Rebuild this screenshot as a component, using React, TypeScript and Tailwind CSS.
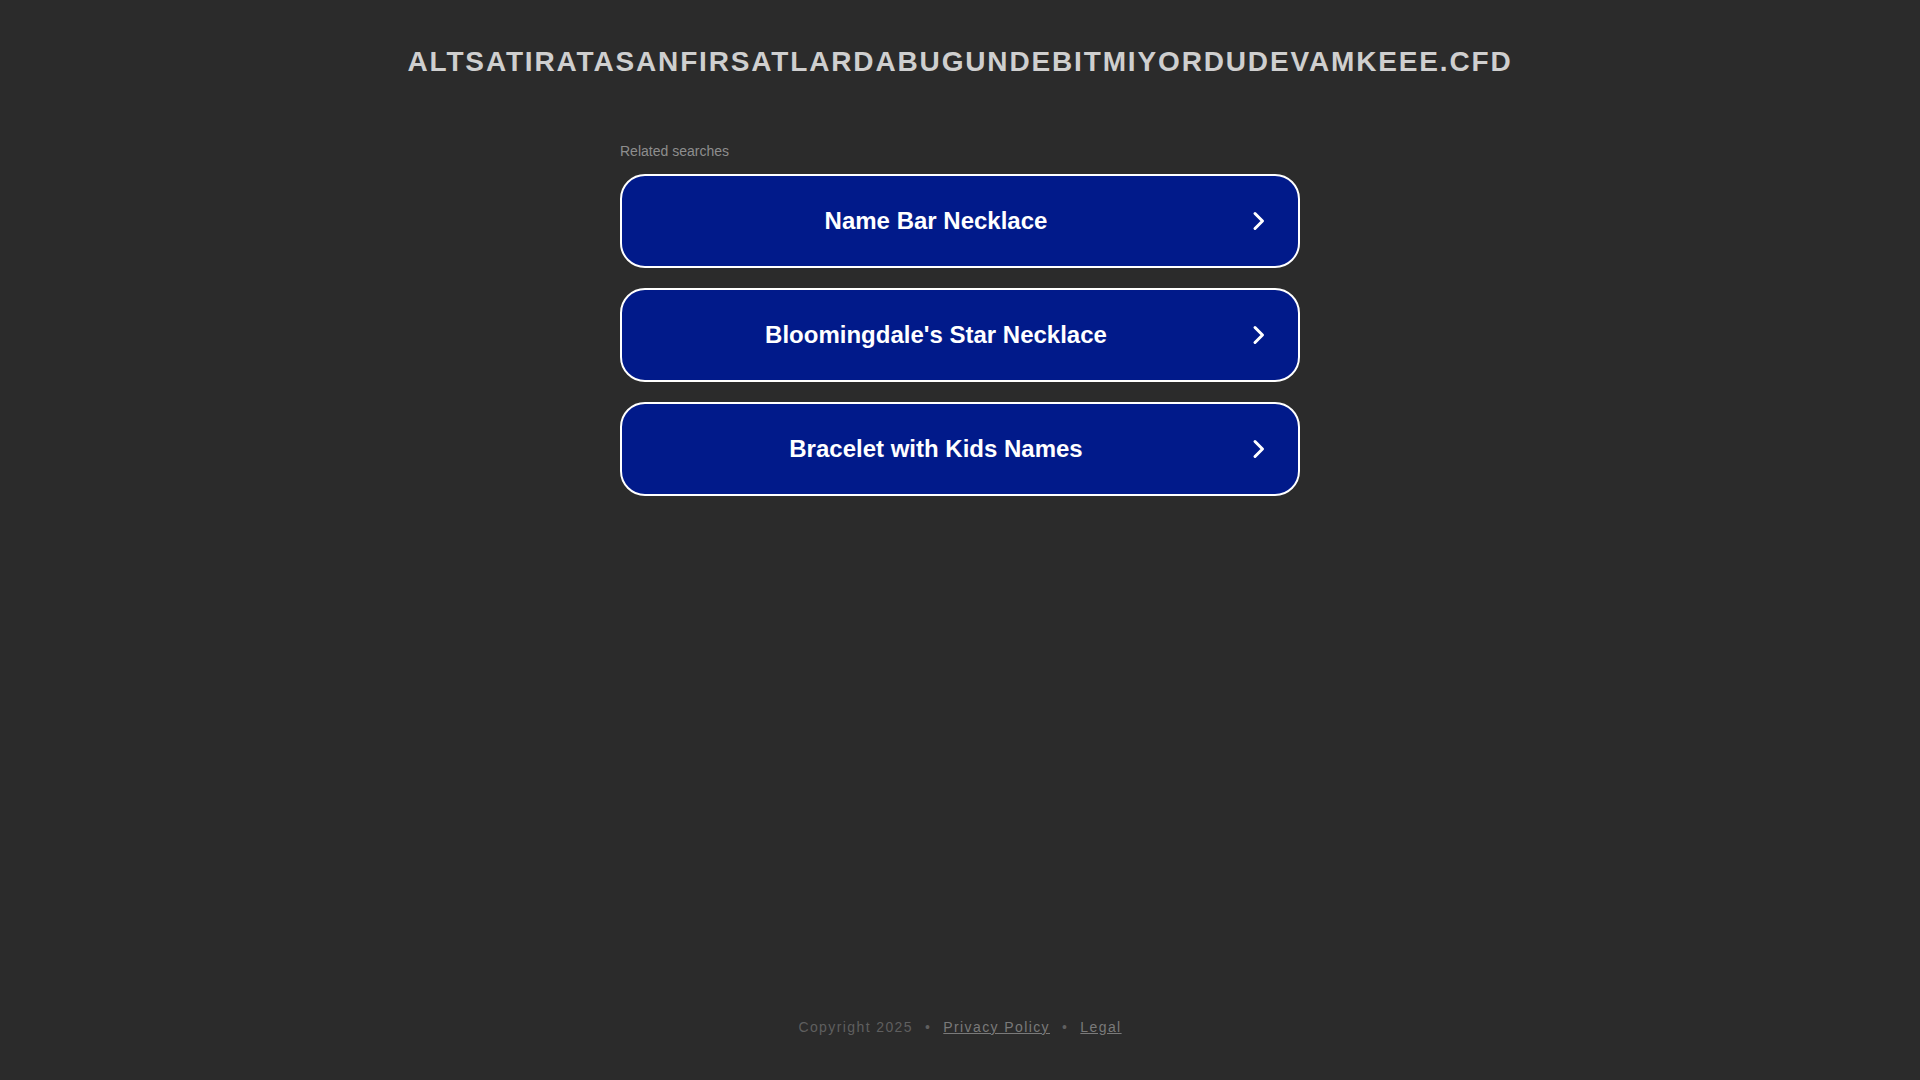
const searches = ['Name Bar Necklace', "Bloomingdale's Star Necklace", 'Bracelet with Kids Names'];

function Chevron() {
  return (
    <svg width="14" height="20" viewBox="0 0 14 20" fill="none" className="shrink-0">
      <path d="M3 2.5 L10.5 10 L3 17.5" stroke="white" strokeWidth="3" strokeLinecap="round" strokeLinejoin="round" />
    </svg>
  );
}

export default function App() {
  return (
    <div className="flex min-h-screen flex-col bg-[#2b2b2b] font-['Liberation_Sans',Arial,sans-serif]">
      {/* Domain title */}
      <h1 className="pt-[44px] text-center text-[28px] leading-[36px] font-bold tracking-[1.85px] text-[#cfcfcf]">
        ALTSATIRATASANFIRSATLARDABUGUNDEBITMIYORDUDEVAMKEEE.CFD
      </h1>

      {/* Related searches */}
      <div className="mx-auto mt-[63px] w-[680px]">
        <div className="mb-[15px] text-[14px] leading-[16px] text-[#8e8e8e]">Related searches</div>
        <div className="flex flex-col gap-[20px]">
          {searches.map((s) => (
            <a
              key={s}
              href="#"
              className="flex h-[94px] items-center rounded-[25px] border-2 border-white bg-[#011a8a] pr-[32px] text-white"
            >
              <span className="flex-1 pr-[2px] text-center text-[24px] font-bold">{s}</span>
              <Chevron />
            </a>
          ))}
        </div>
      </div>

      {/* Footer */}
      <div className="mt-auto pb-[42px] text-center text-[14px] tracking-[1.4px] text-[#5f5f5f]">
        <span>Copyright 2025</span>
        <span className="mx-[12px]">•</span>
        <a href="#" className="text-[#7a7a7a] underline">Privacy Policy</a>
        <span className="mx-[12px]">•</span>
        <a href="#" className="text-[#7a7a7a] underline">Legal</a>
      </div>
    </div>
  );
}
